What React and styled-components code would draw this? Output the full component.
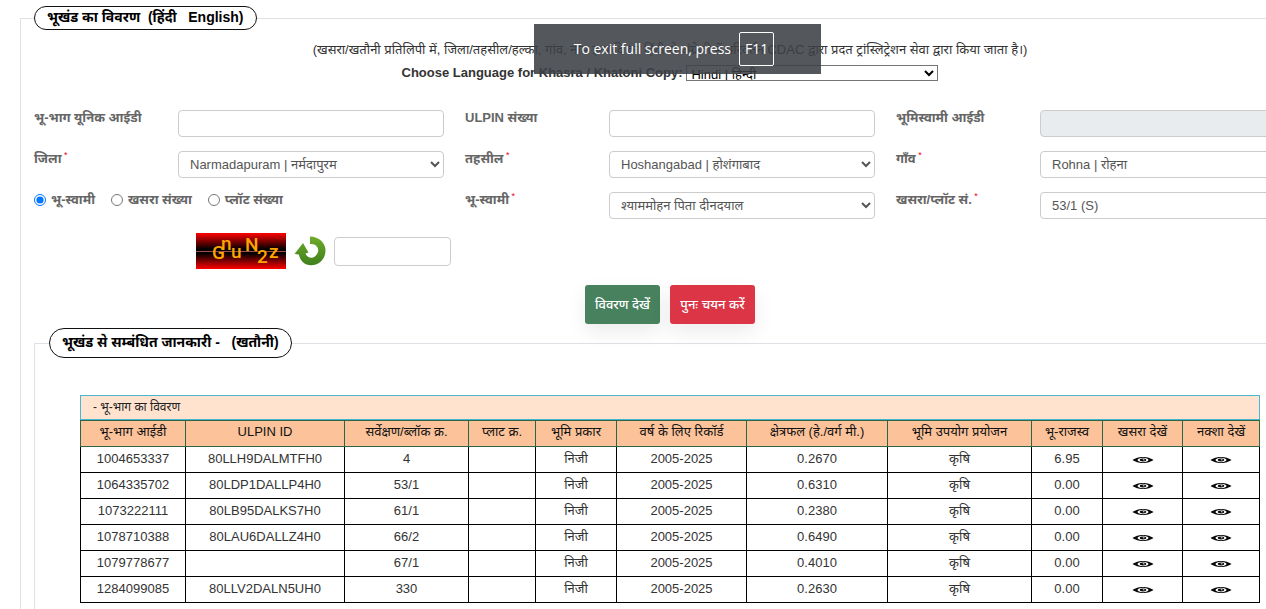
import React from "react";
import styled, { createGlobalStyle } from "styled-components";

const GlobalStyle = createGlobalStyle`
  *, *::before, *::after { box-sizing: border-box; }
  body {
    margin: 0;
    background: #fff;
    color: #333;
    font: 13px/20px "Liberation Sans", "Noto Sans", "Noto Sans Devanagari", sans-serif;
  }
`;

const Page = styled.main`
  position: relative;
  overflow: hidden;
  padding: 6px 0 0 20px;
`;

const Panel = styled.fieldset`
  min-width: 0;
  margin: 0 -54px 0 0;
  padding: 0 13px;
  border: 1px solid #dee2e6;
`;

const InnerPanel = styled.fieldset`
  min-width: 0;
  margin: 0;
  padding: 37px 45px 12px;
  border: 1px solid #dee2e6;
`;

const Legend = styled.legend`
  height: ${(p) => p.$height}px;
  margin-left: ${(p) => p.$indent}px;
  padding: 0 12px;
  border: 1px solid #111;
  border-radius: 16px;
  background: #fff;
  color: #000;
  font-size: 14px;
  font-weight: 700;
  line-height: ${(p) => p.$height - 4}px;
  white-space: pre;
`;

const Intro = styled.div`
  display: flex;
  flex-direction: column;
  align-items: center;
  gap: 5px;
  padding-top: 10px;
`;

const Note = styled.p`
  margin: 0;
  white-space: nowrap;
`;

const LanguageRow = styled.label`
  display: flex;
  align-items: center;
  gap: 4px;
  height: 16px;
  font-weight: 700;
`;

const LanguageSelect = styled.select`
  width: 252px;
  height: 16px;
  padding: 0;
  border: 1px solid #767676;
  border-radius: 0;
  background: #fff;
  color: #000;
  font: 13px/14px "Liberation Sans", "Noto Sans", "Noto Sans Devanagari", sans-serif;
`;

const FormGrid = styled.div`
  display: grid;
  grid-template-columns: repeat(3, minmax(0, 1fr));
  gap: 14px 21px;
  padding-top: 29px;
`;

const Field = styled.div`
  display: grid;
  grid-template-columns: 144px minmax(0, 1fr);
`;

const FieldLabel = styled.label`
  height: 16px;
  color: #666;
  font-weight: 700;
  line-height: 16px;
  white-space: nowrap;
`;

const Star = styled.sup`
  color: #f00020;
  font-size: 9px;
  font-weight: 400;
  line-height: 0;
`;

const controlStyle = `
  width: 100%;
  height: 27px;
  border: 1px solid #ccc;
  border-radius: 4px;
  background: #fff;
  color: #555;
  font: 13px/20px "Liberation Sans", "Noto Sans", "Noto Sans Devanagari", sans-serif;
`;

const TextInput = styled.input`
  ${controlStyle}
  padding: 0 12px;
  &:disabled { background: #e9ecef; }
`;

const Select = styled.select`
  ${controlStyle}
  padding: 0 0 0 7px;
`;

const RadioGroup = styled.div`
  display: flex;
  gap: 16px;
  height: 16px;
`;

const RadioLabel = styled.label`
  display: flex;
  align-items: center;
  gap: 5px;
  color: #666;
  font-weight: 700;
  line-height: 16px;
  white-space: nowrap;
`;

const Radio = styled.input`
  width: 12px;
  height: 12px;
  margin: 0;
`;

const CaptchaRow = styled.div`
  display: flex;
  align-items: center;
  gap: 8px;
  padding: 14px 0 0 162px;
`;

const CaptchaImage = styled.svg`
  display: block;
  width: 90px;
  height: 36px;
`;

const RefreshButton = styled.button`
  width: 32px;
  height: 32px;
  padding: 0;
  border: 0;
  background: none;
  svg { display: block; }
`;

const CaptchaInput = styled(TextInput)`
  width: 117px;
  height: 29px;
`;

const Actions = styled.div`
  display: flex;
  justify-content: center;
  gap: 10px;
  padding: 16px 0 4px;
`;

const ActionButton = styled.button`
  width: ${(p) => p.$width}px;
  height: 39px;
  padding: 0;
  border: 0;
  border-radius: 3px;
  background: ${(p) => p.$color};
  box-shadow: 0 8px 20px rgba(0, 0, 0, 0.08);
  color: #fff;
  font: 500 13px/20px "Liberation Sans", "Noto Sans", "Noto Sans Devanagari", sans-serif;
  white-space: nowrap;
`;

const DataTable = styled.table`
  width: 100%;
  border-collapse: collapse;
  table-layout: fixed;
`;

const TitleBar = styled.div`
  height: 25px;
  padding-left: 12px;
  border: 1px solid #48b5d3;
  background: #ffe3cf;
  color: #222;
  font-size: 12px;
  line-height: 23px;
`;

const HeadCell = styled.th`
  height: 26px;
  padding: 0 0 4px;
  border: 1px solid #2c6647;
  background: #fcc39b;
  color: #111;
  font-weight: 400;
  line-height: 20px;
  white-space: nowrap;
`;

const Cell = styled.td`
  height: 26px;
  padding: 0 0 2px;
  border: 1px solid #000;
  line-height: 20px;
  text-align: center;
  white-space: nowrap;
`;

const EyeButton = styled.button`
  display: block;
  margin: 2px auto 0;
  padding: 0;
  border: 0;
  background: none;
  svg { display: block; }
`;

const FullscreenHint = styled.div`
  position: absolute;
  top: 24px;
  left: 534px;
  display: flex;
  align-items: center;
  justify-content: center;
  gap: 8px;
  width: 287px;
  height: 50px;
  padding-right: 7px;
  background: rgba(60, 64, 69, 0.88);
  color: #fff;
  font: 14px/20px "Open Sans", "Noto Sans", sans-serif;
  white-space: nowrap;
`;

const Key = styled.kbd`
  padding: 6px 5px;
  border: 1px solid #fff;
  border-radius: 2px;
  font: inherit;
`;

function Eye() {
  return (
    <svg width="22" height="8" viewBox="0 0 22 8" aria-hidden="true">
      <path d="M.5 4C4 2 6 1 11 1S18 2 21.500 4C18 6 16 7 11 7S4 6 .5 4Z" fill="#080808" />
      <ellipse cx="11" cy="4" rx="5.500" ry="2.200" fill="#fff" />
      <ellipse cx="11" cy="4" rx="3.200" ry="1.400" fill="#080808" />
      <ellipse cx="11.700" cy="3.700" rx="1" ry=".5" fill="#fff" />
    </svg>
  );
}

function Refresh() {
  return (
    <svg width="32" height="32" viewBox="0 0 32 32" aria-hidden="true">
      <defs>
        <linearGradient id="leaf" x1="0" y1="0" x2="0" y2="1">
          <stop offset="0" stopColor="#6fab2b" />
          <stop offset="1" stopColor="#3f801b" />
        </linearGradient>
      </defs>
      <path
        d="M16 1.500C25 1.500 31.500 8 31.500 15.500C31.500 24 25 30.300 17 30.300C11 30.300 6.500 26.500 4.800 19.500L.5 19L9 8L14.500 17.500L11.500 18.500C13 22 16 23.500 19 22.500C23 21 25.500 16 23.500 12.500C22 9.500 19 8.500 16 9Z"
        fill="url(#leaf)"
      />
    </svg>
  );
}

function Captcha() {
  return (
    <CaptchaImage viewBox="0 0 90 36" role="img" aria-label="Captcha">
      <defs>
        <linearGradient id="glow" x1="0" y1="0" x2="0" y2="1">
          <stop offset="0" stopColor="#f00" />
          <stop offset=".45" stopColor="#000" />
          <stop offset=".56" stopColor="#000" />
          <stop offset="1" stopColor="#f00" />
        </linearGradient>
      </defs>
      <rect width="90" height="36" fill="url(#glow)" />
      <path d="M0 18.500H90" stroke="#a34c45" />
      <g fill="#ffa500" fontFamily="Roboto" fontWeight="500" fontSize="19">
        <text x="16" y="26">G</text>
        <text x="25" y="17">n</text>
        <text x="35" y="25">u</text>
        <text x="49" y="18">N</text>
        <text x="61" y="30">2</text>
        <text x="73" y="25">z</text>
      </g>
    </CaptchaImage>
  );
}

function Labelled({ id, text, required, children }) {
  return (
    <Field>
      <FieldLabel htmlFor={id}>
        {text}
        {required && <Star> *</Star>}
      </FieldLabel>
      {children}
    </Field>
  );
}

const columns = [
  ["भू-भाग आईडी", 105],
  ["ULPIN ID", 159],
  ["सर्वेक्षण/ब्लॉक क्र.", 124],
  ["प्लाट क्र.", 67],
  ["भूमि प्रकार", 81],
  ["वर्ष के लिए रिकॉर्ड", 130],
  ["क्षेत्रफल (हे./वर्ग मी.)", 141],
  ["भूमि उपयोग प्रयोजन", 144],
  ["भू-राजस्व", 71],
  ["खसरा देखें", 80],
  ["नक्शा देखें", 77],
];

const parcels = [
  ["1004653337", "80LLH9DALMTFH0", "4", "0.2670", "6.95"],
  ["1064335702", "80LDP1DALLP4H0", "53/1", "0.6310", "0.00"],
  ["1073222111", "80LB95DALKS7H0", "61/1", "0.2380", "0.00"],
  ["1078710388", "80LAU6DALLZ4H0", "66/2", "0.6490", "0.00"],
  ["1079778677", "", "67/1", "0.4010", "0.00"],
  ["1284099085", "80LLV2DALN5UH0", "330", "0.2630", "0.00"],
];

export default function App() {
  return (
    <Page>
      <GlobalStyle />
      <Panel>
        <Legend $height={24} $indent={0}>{"भूखंड का विवरण  (हिंदी   English)"}</Legend>
        <Intro>
          <Note>
            (खसरा/खतौनी प्रतिलिपी में, जिला/तहसील/हल्का, गांव, नाम इत्यादि का हिंदी से अंग्रेजी में परिवर्तन CDAC द्वारा प्रदत ट्रांस्लिट्रेशन सेवा द्वारा किया जाता है।)
          </Note>
          <LanguageRow>
            Choose Language for Khasra / Khatoni Copy:
            <LanguageSelect>
              <option>Hindi | हिन्दी</option>
            </LanguageSelect>
          </LanguageRow>
        </Intro>

        <FormGrid>
          <Labelled id="land" text="भू-भाग यूनिक आईडी">
            <TextInput id="land" />
          </Labelled>
          <Labelled id="ulpin" text="ULPIN संख्या">
            <TextInput id="ulpin" />
          </Labelled>
          <Labelled id="ownerId" text="भूमिस्वामी आईडी">
            <TextInput id="ownerId" disabled />
          </Labelled>
          <Labelled id="district" text="जिला" required>
            <Select id="district"><option>Narmadapuram | नर्मदापुरम</option></Select>
          </Labelled>
          <Labelled id="tehsil" text="तहसील" required>
            <Select id="tehsil"><option>Hoshangabad | होशंगाबाद</option></Select>
          </Labelled>
          <Labelled id="village" text="गाँव" required>
            <Select id="village"><option>Rohna | रोहना</option></Select>
          </Labelled>
          <RadioGroup>
            <RadioLabel><Radio type="radio" name="by" defaultChecked />भू-स्वामी</RadioLabel>
            <RadioLabel><Radio type="radio" name="by" />खसरा संख्या</RadioLabel>
            <RadioLabel><Radio type="radio" name="by" />प्लॉट संख्या</RadioLabel>
          </RadioGroup>
          <Labelled id="owner" text="भू-स्वामी" required>
            <Select id="owner"><option>श्याममोहन पिता दीनदयाल</option></Select>
          </Labelled>
          <Labelled id="plot" text="खसरा/प्लॉट सं." required>
            <Select id="plot"><option>53/1 (S)</option></Select>
          </Labelled>
        </FormGrid>

        <CaptchaRow>
          <Captcha />
          <RefreshButton type="button" aria-label="Refresh"><Refresh /></RefreshButton>
          <CaptchaInput aria-label="Captcha" />
        </CaptchaRow>

        <Actions>
          <ActionButton type="button" $width={75} $color="#47815d">विवरण देखें</ActionButton>
          <ActionButton type="button" $width={85} $color="#dc3545">पुनः चयन करें</ActionButton>
        </Actions>

        <InnerPanel>
          <Legend $height={30} $indent={-31}>{"भूखंड से सम्बंधित जानकारी -   (खतौनी)"}</Legend>
          <TitleBar>- भू-भाग का विवरण</TitleBar>
          <DataTable>
            <colgroup>
              {columns.map(([name, width]) => (
                <col key={name} width={`${(width / 1179) * 100}%`} />
              ))}
            </colgroup>
            <thead>
              <tr>
                {columns.map(([name]) => <HeadCell key={name}>{name}</HeadCell>)}
              </tr>
            </thead>
            <tbody>
              {parcels.map(([id, ulpin, survey, area, revenue]) => (
                <tr key={id}>
                  <Cell>{id}</Cell>
                  <Cell>{ulpin}</Cell>
                  <Cell>{survey}</Cell>
                  <Cell />
                  <Cell>निजी</Cell>
                  <Cell>2005-2025</Cell>
                  <Cell>{area}</Cell>
                  <Cell>कृषि</Cell>
                  <Cell>{revenue}</Cell>
                  <Cell><EyeButton type="button" aria-label="खसरा देखें"><Eye /></EyeButton></Cell>
                  <Cell><EyeButton type="button" aria-label="नक्शा देखें"><Eye /></EyeButton></Cell>
                </tr>
              ))}
            </tbody>
          </DataTable>
        </InnerPanel>
      </Panel>

      <FullscreenHint>
        To exit full screen, press <Key>F11</Key>
      </FullscreenHint>
    </Page>
  );
}
